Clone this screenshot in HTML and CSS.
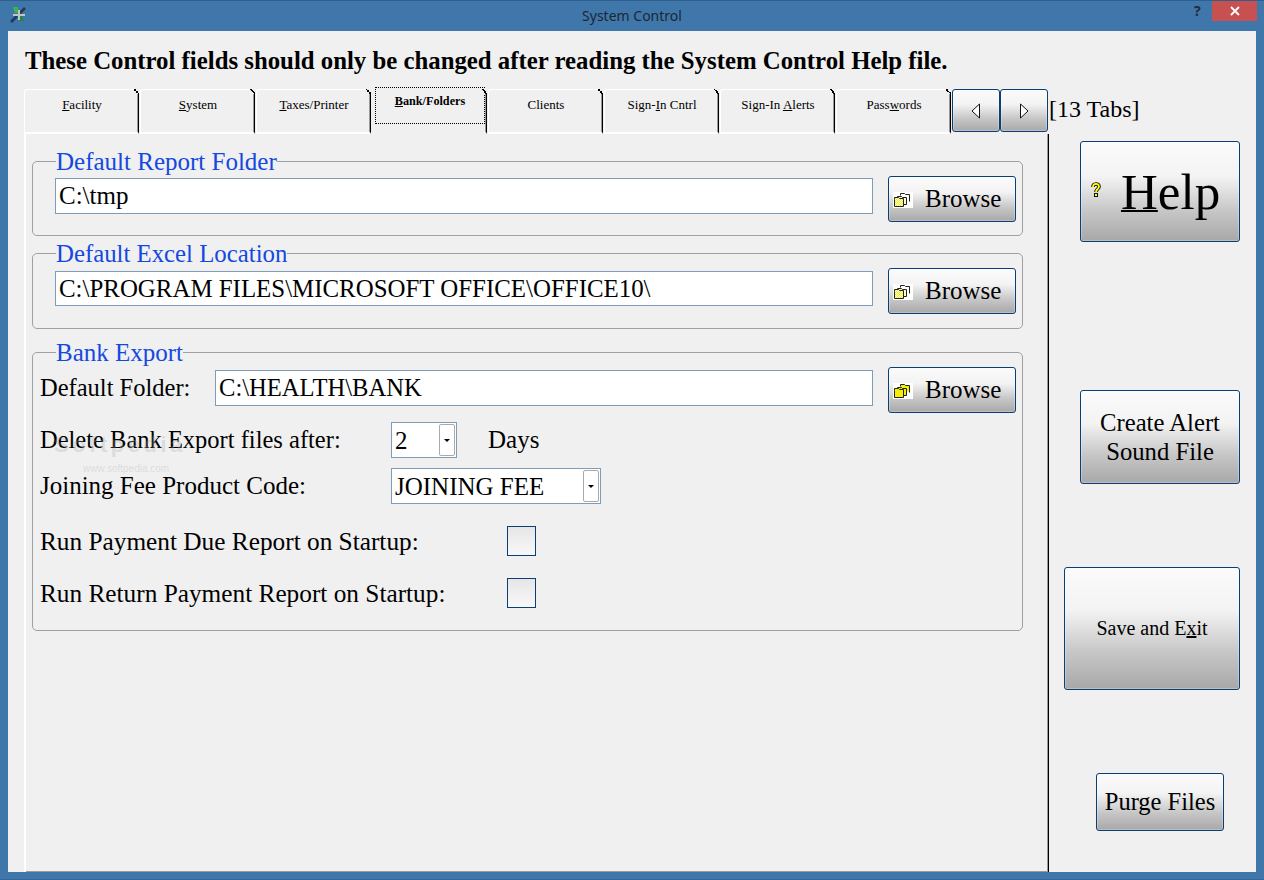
FILE: index.html
```html
<!DOCTYPE html>
<html lang="en">
<head>
<meta charset="utf-8">
<title>System Control</title>
<link rel="stylesheet" href="styles.css">
</head>
<body>
<div class="window">
  <header class="titlebar">
    <svg class="app-icon" width="16" height="16" viewBox="0 0 16 16">
      <path d="M1 15 L7 9" stroke="#1f3a68" stroke-width="3"/>
      <path d="M9 7 L15 1" stroke="#2f3944" stroke-width="2.600"/>
      <path d="M3 0 L8 0 L8 6 L5 6 Z" fill="#39b54a"/>
      <path d="M9 9 L12 9 L14 14 L9 14 Z" fill="#1b8c3a"/>
      <path d="M9 3 V13 M3 8 H15" stroke="#c4c4c4" stroke-width="2"/>
    </svg>
    <div class="title">System Control</div>
    <div class="help-q">?</div>
    <div class="close">
      <svg width="10" height="10" viewBox="0 0 10 10"><path d="M1 1 L9 9 M9 1 L1 9" stroke="#fff" stroke-width="1.800"/></svg>
    </div>
  </header>
  <div class="client">
    <div class="notice">These Control fields should only be changed after reading the System Control Help file.</div>
    <div class="tabbar">
      <div class="tab"><u>F</u>acility</div>
      <div class="tab"><u>S</u>ystem</div>
      <div class="tab"><u>T</u>axes/Printer</div>
      <div class="tab tab-active"><span class="focus"><u>B</u>ank/Folders</span></div>
      <div class="tab">Clients</div>
      <div class="tab">Sign-<u>I</u>n Cntrl</div>
      <div class="tab">Sign-In <u>A</u>lerts</div>
      <div class="tab">Pass<u>w</u>ords</div>
      <div class="btn nav"><svg width="10" height="16" viewBox="0 0 10 16"><path d="M8.500 1 L1 8 L8.500 15 Z" fill="#fff" stroke="#111"/></svg></div>
      <div class="btn nav"><svg width="10" height="16" viewBox="0 0 10 16"><path d="M1.500 1 L9 8 L1.500 15 Z" fill="#fff" stroke="#111"/></svg></div>
      <div class="tabcount">[13 Tabs]</div>
    </div>
    <div class="content">
      <main class="page">
        <fieldset class="group group-a">
          <legend>Default Report Folder</legend>
          <div class="path-row">
            <div class="field field-path field-tmp">C:\tmp</div>
            <div class="btn browse">
              <svg class="folder" width="20" height="16" viewBox="0 0 20 16">
                <defs><pattern id="d1" width="2" height="2" patternUnits="userSpaceOnUse"><rect width="2" height="2" fill="#fff"/><rect width="1" height="1" fill="#f5f000"/><rect x="1" y="1" width="1" height="1" fill="#f5f000"/></pattern></defs>
                <rect width="20" height="16" fill="#fff"/>
                <path d="M7.500 3.500 V1.500 H11.500 L12.500 2.500 H16.500 V9.500" fill="none" stroke="#222"/>
                <path d="M4.500 4.500 H8.500 L9.500 5.500 H13.500 V12.500 H4.500 Z" fill="#fbfbd0" stroke="#222"/>
                <path d="M1.500 7.500 V5.500 H5.500 L6.500 6.500 H10.500 V14.500 H1.500 Z" fill="url(#d1)" stroke="#222"/>
              </svg>
              <span>Browse</span>
            </div>
          </div>
        </fieldset>
        <fieldset class="group group-b">
          <legend class="legend-excel">Default Excel Location</legend>
          <div class="path-row">
            <div class="field field-path field-excel">C:\PROGRAM FILES\MICROSOFT OFFICE\OFFICE10\</div>
            <div class="btn browse">
              <svg class="folder" width="20" height="16" viewBox="0 0 20 16">
                <defs><pattern id="d2" width="2" height="2" patternUnits="userSpaceOnUse"><rect width="2" height="2" fill="#fff"/><rect width="1" height="1" fill="#f5f000"/><rect x="1" y="1" width="1" height="1" fill="#f5f000"/></pattern></defs>
                <rect width="20" height="16" fill="#fff"/>
                <path d="M7.500 3.500 V1.500 H11.500 L12.500 2.500 H16.500 V9.500" fill="none" stroke="#222"/>
                <path d="M4.500 4.500 H8.500 L9.500 5.500 H13.500 V12.500 H4.500 Z" fill="#fbfbd0" stroke="#222"/>
                <path d="M1.500 7.500 V5.500 H5.500 L6.500 6.500 H10.500 V14.500 H1.500 Z" fill="url(#d2)" stroke="#222"/>
              </svg>
              <span>Browse</span>
            </div>
          </div>
        </fieldset>
        <fieldset class="group group-c">
          <legend>Bank Export</legend>
          <div class="path-row folder-row">
            <div class="label label-folder">Default Folder:</div>
            <div class="field field-folder">C:\HEALTH\BANK</div>
            <div class="btn browse">
              <svg class="folder" width="20" height="16" viewBox="0 0 20 16">
                <rect width="20" height="16" fill="#fff"/>
                <path d="M7.500 3.500 V1.500 H11.500 L12.500 2.500 H16.500 V9.500" fill="#f5f000" stroke="#222"/>
                <path d="M4.500 4.500 H8.500 L9.500 5.500 H13.500 V12.500 H4.500 Z" fill="#f5f000" stroke="#222"/>
                <path d="M1.500 7.500 V5.500 H5.500 L6.500 6.500 H10.500 V14.500 H1.500 Z" fill="#f5f000" stroke="#222"/>
              </svg>
              <span>Browse</span>
            </div>
          </div>
          <div class="row row-delete">
            <div class="label label-combo label-delete">Delete Bank Export files after:</div>
            <div class="field combo combo-days"><span>2</span><div class="drop"><i></i></div></div>
            <div class="days">Days</div>
          </div>
          <div class="row row-joining">
            <div class="label label-combo">Joining Fee Product Code:</div>
            <div class="field combo combo-code"><span>JOINING FEE</span><div class="drop"><i></i></div></div>
          </div>
          <div class="row row-check1">
            <div class="label label-check">Run Payment Due Report on Startup:</div>
            <div class="check"></div>
          </div>
          <div class="row row-check2">
            <div class="label label-check">Run Return Payment Report on Startup:</div>
            <div class="check"></div>
          </div>
        </fieldset>
        <div class="wm wm-a">Softpedia</div>
        <div class="wm wm-b">www.softpedia.com</div>
      </main>
      <aside class="side">
        <div class="btn side-help">
          <svg class="qmark" width="10" height="16" viewBox="0 0 10 16"><path d="M2 5 C2 1 8 1 8 4.500 C8 7 5 7 5 10" fill="none" stroke="#111" stroke-width="3.600"/><path d="M2 5 C2 1 8 1 8 4.500 C8 7 5 7 5 10" fill="none" stroke="#ff0" stroke-width="1.800"/><rect x="3.500" y="11.500" width="3" height="3" fill="#ff0" stroke="#111"/></svg>
          <span class="help-text"><u>H</u>elp</span>
        </div>
        <div class="btn side-alert">Create Alert<br>Sound File</div>
        <div class="btn side-save">Save and E<u>x</u>it</div>
        <div class="btn side-purge">Purge Files</div>
      </aside>
    </div>
  </div>
</div>
</body>
</html>
```
FILE: styles.css
```css
* { box-sizing: border-box; }
html, body { margin: 0; padding: 0; height: 100%; }
body { font-family: "Liberation Serif", "Times New Roman", serif; color: #000; }

.window {
  width: 1264px; height: 880px;
  display: flex; flex-direction: column;
  background: #3f77aa;
  border-top: 1px solid #2f5f8f;
  border-bottom: 1px solid #33659a;
}
.titlebar { height: 30px; display: flex; position: relative; align-items: flex-start; }
.app-icon { position: absolute; left: 10px; top: 6px; }
.title {
  width: 100%; text-align: center;
  font: 14px/30px "Noto Sans", "Open Sans", sans-serif; color: #1c2733;
}
.help-q { position: absolute; left: 1194px; top: 2px; font: bold 14px/16px "Noto Sans", sans-serif; color: #222c38; }
.close {
  position: absolute; left: 1212px; top: 0; width: 45px; height: 20px;
  background: #c75050; display: flex; align-items: center; justify-content: center;
}

.client {
  flex: 1; margin: 0 8px 7px;
  background: #f0f0f0;
  display: flex; flex-direction: column; min-height: 0;
}
.notice {
  height: 58px; padding: 16px 0 0 17px;
  font-weight: bold; font-size: 24.800px; line-height: 28px; white-space: nowrap;
}
.tabbar { height: 45px; display: flex; padding-left: 16px; align-items: flex-start; }
.tab {
  width: 115px; height: 45px; flex: none; margin-right: 1px; position: relative;
  border-top: 1px solid #fff; border-left: 1px solid #fff; border-right: 1px solid #000;
  border-bottom: 2px solid #fff;
  border-top-left-radius: 3px;
  box-shadow: inset -1px 0 0 #999;
  font-size: 13px; line-height: 15px; text-align: center; padding: 7px 0 0 1px;
}
.tab::after {
  content: ""; position: absolute; right: -1px; top: -1px; width: 5px; height: 5px;
  background: linear-gradient(45deg, #f0f0f0 0 40%, #000 40% 60%, #f0f0f0 60% 100%);
}
.tab-active {
  border-bottom-color: #f0f0f0; border-top-color: #f0f0f0; border-left-color: #f0f0f0;
  padding: 0;
}
.focus {
  position: absolute; left: 2px; top: -3px; width: 110px; height: 37px;
  border: 1px dotted #000; font-weight: bold; font-size: 12.200px; padding-top: 6px; display: block;
}
.btn {
  border: 1px solid #0a3f75; border-radius: 3px;
  background: linear-gradient(#fbfbfb 0%, #f3f3f3 35%, #c6c6c6 70%, #a8a8a8 100%);
  box-shadow: inset 0 0 0 1px rgba(255,255,255,.25);
  flex: none;
}
.nav { width: 48px; height: 43px; display: flex; align-items: center; justify-content: center; }
.tabcount { font-size: 24px; line-height: 40px; margin-left: 1px; white-space: nowrap; }

.content { flex: 1; display: flex; min-height: 0; }
.page {
  width: 1041px; position: relative; flex: none;
  border-right: 1px solid #000;
  box-shadow: inset -1px 0 0 #999;
  padding: 13px 24px 0 24px;
}
.page::before {
  content: ""; position: absolute; left: 16px; top: 0; bottom: 0; width: 2px; background: #fff;
}
.page::after {
  content: ""; position: absolute; left: 18px; right: 0; bottom: 0; height: 1px; background: #999;
}
.group {
  margin: 0; width: 991px; padding: 0;
  border: 1px solid #a0a0a0; border-radius: 5px;
  position: relative; min-width: 0;
}
.group legend {
  margin-left: 23px; padding: 0; position: relative; top: 1px;
  font-size: 25px; line-height: 28px; color: #1448e0;
}
.group legend.legend-excel { font-size: 24.800px; }
.group-a { height: 89px; }
.group-b { height: 90px; margin-top: 3px; }
.group-c { height: 293px; margin-top: 9px; }

.path-row { display: flex; align-items: flex-start; padding-left: 22px; margin-top: 1px; }
.field {
  background: #fff; border: 1px solid #7f9db9;
  font-size: 25px; line-height: 33px; padding-left: 3px; white-space: nowrap; flex: none;
}
.field-path { width: 818px; height: 35px; margin-top: 3px; }
.field-tmp { margin-top: 2px; height: 36px; }
.field-excel { font-size: 24.900px; }
.folder-row { padding-left: 7px; }
.field-folder { width: 658px; height: 36px; margin-top: 3px; font-size: 24.600px; }
.browse {
  width: 128px; height: 46px; margin-left: 15px;
  display: flex; align-items: center; padding-left: 4px;
  font-size: 25px;
}
.folder { flex: none; margin-top: 1px; }
.browse span { margin-left: 12px; }

.label { font-size: 25px; line-height: 30px; white-space: nowrap; flex: none; padding-left: 7px; }
.folder-row .label { padding-left: 0; margin-top: 6px; font-size: 24.500px; }
.label-folder { width: 175px; }
.label-combo { width: 358px; }
.label-delete { font-size: 24.500px; }
.label-check { width: 474px; font-size: 25.300px; }
.row { display: flex; align-items: center; }
.row-delete { margin-top: 9px; }
.row-joining { margin-top: 10px; }
.row-check1 { margin-top: 22px; }
.row-check2 { margin-top: 22px; }
.combo { display: flex; justify-content: space-between; align-items: center; height: 36px; padding-right: 1px; }
.combo-days { width: 66px; }
.combo-code { width: 210px; }
.drop {
  width: 16px; height: 32px; background: #fff;
  border: 1px solid #aaa; border-radius: 2px;
  display: flex; align-items: center; justify-content: center;
}
.drop i { width: 0; height: 0; border: 3px solid transparent; border-top: 3px solid #000; border-bottom: 0; display: block; }
.days { font-size: 25px; line-height: 30px; margin-left: 31px; }
.check {
  width: 29px; height: 30px; border: 1px solid #0a3f75;
  background: linear-gradient(#e6e6e6, #f8f8f8);
}

.wm { position: absolute; color: rgba(170,170,170,.3); white-space: nowrap; pointer-events: none; }
.wm-a { left: 46px; top: 299px; font: bold 22px/24px "Liberation Sans", sans-serif; letter-spacing: 3.500px; }
.wm-b { left: 75px; top: 329px; font: 10px/12px "Liberation Sans", sans-serif; }

.side { flex: 1; display: flex; flex-direction: column; align-items: flex-end; padding-right: 16px; padding-top: 7px; }
.side-help {
  width: 160px; height: 101px; display: flex; align-items: center; padding-left: 10px; position: relative;
}
.qmark { flex: none; margin-bottom: 4px; }
.help-text { font-size: 51px; margin-left: 20px; line-height: 60px; }
.help-text u { text-decoration-thickness: 2px; }
.side-alert {
  width: 160px; height: 94px; margin-top: 148px;
  font-size: 24.700px; line-height: 29px; text-align: center; padding-top: 17px;
}
.side-save {
  width: 176px; height: 123px; margin-top: 83px;
  font-size: 20px; line-height: 24px; text-align: center; padding-top: 48px;
}
.side-purge {
  width: 128px; height: 58px; margin-top: 83px; margin-right: 16px;
  font-size: 24.500px; line-height: 55px; text-align: center;
}
```
